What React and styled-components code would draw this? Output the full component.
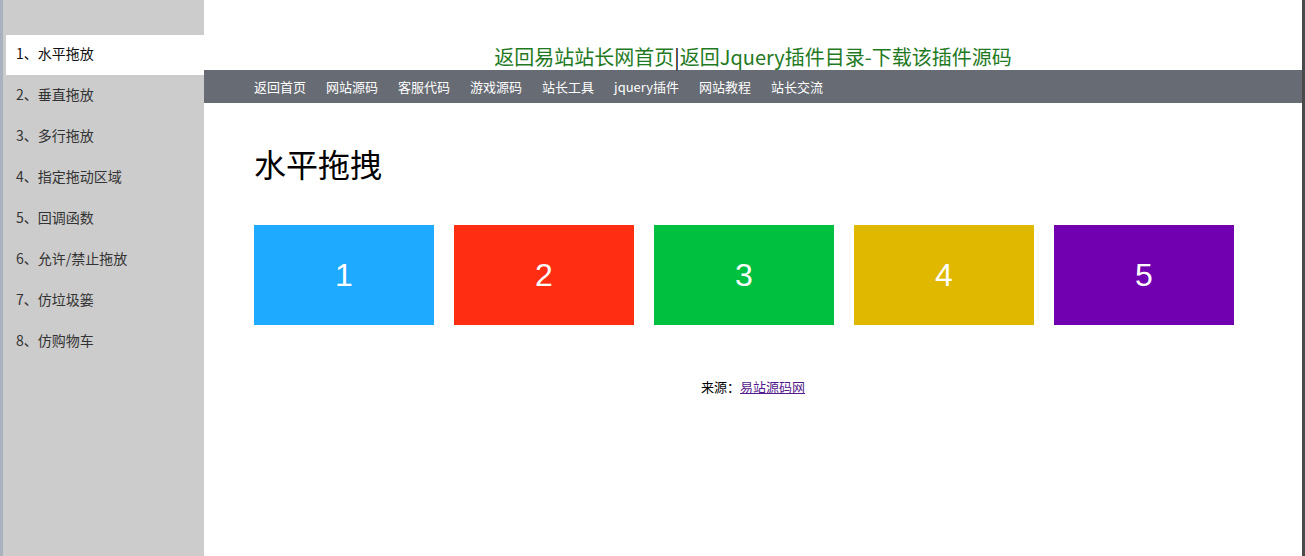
import React, { useState } from 'react'
import styled, { createGlobalStyle } from 'styled-components'

const GlobalStyle = createGlobalStyle`
  html, body {
    margin: 0;
    padding: 0;
    background: #fff;
  }
  body {
    font-family: "Noto Sans CJK SC", "Noto Sans", sans-serif;
  }
`

const Page = styled.div`
  display: flex;
  height: 556px;
  overflow: hidden;
`

const Sidebar = styled.ul`
  width: 198px;
  flex-shrink: 0;
  margin: 0;
  padding: 35px 0 0 3px;
  list-style: none;
  background: #cccccc;
  border-left: 3px solid #aab1bc;
`

const MenuItem = styled.li`
  height: 40px;
  line-height: 37px;
  margin-bottom: 1px;
  padding-left: 10px;
  font-size: 14px;
  color: ${p => (p.active ? '#111' : '#333')};
  background: ${p => (p.active ? '#fff' : 'transparent')};
  cursor: pointer;
`

const Main = styled.div`
  flex: 1;
  border-right: 3px solid #4a4a4a;
`

const Title = styled.div`
  padding-top: 44px;
  height: 26px;
  line-height: 26px;
  text-align: center;
  font-size: 20px;
  color: #1f7a1f;
  white-space: nowrap;
`

const TitleLink = styled.a`
  color: #1f7a1f;
  text-decoration: none;
`

const Divider = styled.span`
  color: #000;
`

const Nav = styled.div`
  display: flex;
  gap: 20px;
  height: 33px;
  align-items: center;
  padding-left: 50px;
  background: #676b73;
`

const NavLink = styled.a`
  color: #fff;
  font-size: 13px;
  text-decoration: none;
`

const Content = styled.div`
  padding: 0 50px;
`

const Heading = styled.h1`
  margin: 41px 0 43px;
  font-size: 32px;
  font-weight: normal;
  line-height: 38px;
  color: #000;
`

const Boxes = styled.div`
  display: flex;
  gap: 20px;
`

const Box = styled.div`
  width: 180px;
  height: 100px;
  display: flex;
  align-items: center;
  justify-content: center;
  background: ${p => p.color};
  color: #fff;
  font-family: "Liberation Sans", Arial, sans-serif;
  font-size: 32px;
  cursor: move;
`

const Source = styled.p`
  margin: 52px 0 0;
  line-height: 20px;
  text-align: center;
  font-size: 13px;
  color: #000;
`

const SourceLink = styled.a`
  color: #551a8b;
  text-decoration: underline;
`

const menu = [
  '1、水平拖放',
  '2、垂直拖放',
  '3、多行拖放',
  '4、指定拖动区域',
  '5、回调函数',
  '6、允许/禁止拖放',
  '7、仿垃圾篓',
  '8、仿购物车',
]

const navLinks = ['返回首页', '网站源码', '客服代码', '游戏源码', '站长工具', 'jquery插件', '网站教程', '站长交流']

const colors = ['#1eaaff', '#ff2e12', '#00c040', '#e0b800', '#7000b0']

const App = () => {
  const [active, setActive] = useState(0)
  const [order, setOrder] = useState([1, 2, 3, 4, 5])

  return (
    <Page>
      <GlobalStyle />
      <Sidebar>
        {menu.map((item, i) => (
          <MenuItem key={item} active={i === active} onClick={() => setActive(i)}>
            {item}
          </MenuItem>
        ))}
      </Sidebar>
      <Main>
        <Title>
          <TitleLink href="#">返回易站站长网首页</TitleLink>
          <Divider>|</Divider>
          <TitleLink href="#">返回Jquery插件目录-下载该插件源码</TitleLink>
        </Title>
        <Nav>
          {navLinks.map(link => (
            <NavLink key={link} href="#">{link}</NavLink>
          ))}
        </Nav>
        <Content>
          <Heading>水平拖拽</Heading>
          <Boxes>
            {order.map(n => (
              <Box
                key={n}
                color={colors[n - 1]}
                draggable
                onDragStart={e => e.dataTransfer.setData('text/plain', String(n))}
                onDragOver={e => e.preventDefault()}
                onDrop={e => {
                  const from = Number(e.dataTransfer.getData('text/plain'))
                  const next = order.filter(x => x !== from)
                  next.splice(next.indexOf(n), 0, from)
                  setOrder(next)
                }}
              >
                {n}
              </Box>
            ))}
          </Boxes>
          <Source>
            来源：<SourceLink href="#">易站源码网</SourceLink>
          </Source>
        </Content>
      </Main>
    </Page>
  )
}

export default App
